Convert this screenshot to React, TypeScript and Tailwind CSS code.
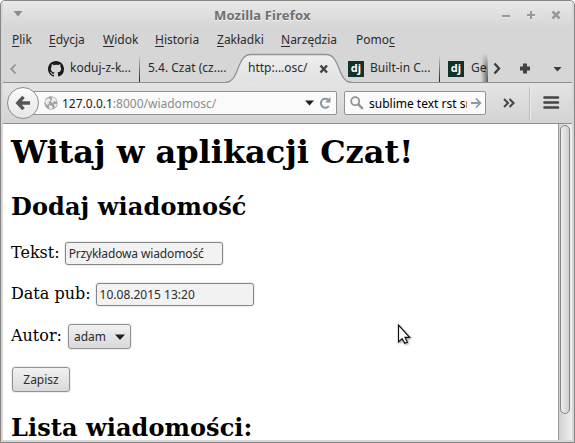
import React from 'react';

const menu = [
  { before: '', key: 'P', after: 'lik', width: 'w-[37px]' },
  { before: '', key: 'E', after: 'dycja', width: 'w-[54px]' },
  { before: '', key: 'W', after: 'idok', width: 'w-[52px]' },
  { before: '', key: 'H', after: 'istoria', width: 'w-[62px]' },
  { before: '', key: 'Z', after: 'akładki', width: 'w-[64px]' },
  { before: '', key: 'N', after: 'arzędzia', width: 'w-[75px]' },
  { before: 'Pomo', key: 'c', after: '', width: 'w-[60px]' },
];

function Django() {
  return (
    <span className="flex h-4 w-4 shrink-0 items-center justify-center bg-[#113228] font-['Open_Sans',sans-serif] text-[11px] leading-4 font-bold text-white">
      <span className="-mt-[2px]">dj</span>
    </span>
  );
}

function GitHub() {
  return (
    <svg className="h-4 w-4 shrink-0" viewBox="0 0 16 16" fill="#1b1b1b">
      <path d="M8 0C3.58 0 0 3.58 0 8c0 3.54 2.29 6.53 5.47 7.59.4.07.55-.17.55-.38 0-.19-.01-.82-.01-1.49-2.01.37-2.53-.49-2.69-.94-.09-.23-.48-.94-.82-1.13-.28-.15-.68-.52-.01-.53.63-.01 1.08.58 1.23.82.72 1.21 1.87.87 2.33.66.07-.52.28-.87.51-1.07-1.78-.2-3.64-.89-3.64-3.95 0-.87.31-1.59.82-2.15-.08-.2-.36-1.02.08-2.12 0 0 .67-.21 2.2.82A7.6 7.6 0 0 1 8 3.86c.68 0 1.36.09 2 .27 1.53-1.04 2.2-.82 2.2-.82.44 1.1.16 1.92.08 2.12.51.56.82 1.27.82 2.15 0 3.07-1.87 3.75-3.65 3.95.29.25.54.73.54 1.48 0 1.07-.01 1.93-.01 2.2 0 .21.15.46.55.38A8.01 8.01 0 0 0 16 8c0-4.42-3.58-8-8-8z" />
    </svg>
  );
}

function Separator() {
  return <span className="h-[27px] w-px shrink-0 self-end bg-linear-to-b from-[#d6d6d6] to-[#222]" />;
}

function TitleBar() {
  return (
    <div className="flex h-[27px] shrink-0 items-center bg-linear-to-b from-[#e8e8e8] to-[#d6d6d6]">
      <svg className="ml-[10px] h-[27px] w-[10px]" viewBox="0 0 10 27"><path d="M0.5 10h9L5 15.5z" fill="#8c8c8c" /></svg>
      <div className="ml-[191px] w-[110px] pt-px text-[13px] leading-[26px] font-bold tracking-[0.16px] whitespace-nowrap text-[#707070] [text-shadow:0_1px_0_#f4f4f4]">Mozilla Firefox</div>
      <svg className="ml-[178px] h-[27px] w-[62px]" viewBox="0 0 62 27" fill="none">
        <path d="M0 15.5h8M25 14.5h8M29 10.5v8M51 11.5l6 6m0-6l-6 6" stroke="#f3f3f3" strokeWidth="2" />
        <path d="M0 15h8M25 14h8M29 10v8" stroke="#989898" strokeWidth="2" />
        <path d="M50.5 10.5l7 7m0-7l-7 7" stroke="#989898" strokeWidth="2.6" />
      </svg>
    </div>
  );
}

function MenuBar() {
  return (
    <div className="flex h-[25px] shrink-0 items-center pb-[2px] pl-[9px] text-[12px] leading-4 text-[#2b2b2b]">
      {menu.map((m) => (
        <span key={m.key} className={`${m.width} shrink-0 whitespace-nowrap`}>
          {m.before}<span className="underline decoration-1 underline-offset-2">{m.key}</span>{m.after}
        </span>
      ))}
    </div>
  );
}

function Tabs() {
  return (
    <div className="flex h-[30px] shrink-0 items-center border-b border-[#8e8e8e] text-[12px] leading-4 whitespace-nowrap text-[#2b2b2b]">
      <svg className="h-[29px] w-[45px] shrink-0" viewBox="0 0 45 29"><path d="M12.5 11.5L8.3 16l4.2 4.5" fill="none" stroke="#929292" strokeWidth="1.8" /></svg>
      <span className="mt-[2px] flex"><GitHub /></span>
      <span className="mt-px ml-[6px] w-[69px] shrink-0">koduj-z-k...</span>
      <Separator />
      <span className="mt-px ml-[8px] w-[80px] shrink-0">5.4. Czat (cz....</span>
      <div className="relative -mb-px flex h-[30px] w-[120px] shrink-0 items-center self-start pl-[20px]">
        <svg className="absolute top-0 -left-[3px] h-[30px] w-[127px]" viewBox="0 0 127 30">
          <defs><linearGradient id="tab" x1="0" y1="0" x2="0" y2="1"><stop stopColor="#eeeeee" /><stop offset="1" stopColor="#e1e1e1" /></linearGradient></defs>
          <path d="M1 29.5C15 29.5 11 1.5 26 1.5H101C116 1.5 112 29.5 126 29.5V30H1Z" fill="url(#tab)" />
          <path d="M0 29.5C15 29.5 11 1.5 26 1.5H101C116 1.5 112 29.5 127 29.5" fill="none" stroke="#8e9499" strokeWidth="1.3" />
        </svg>
        <span className="relative w-[71px]">http:...osc/</span>
        <svg className="relative mt-px h-[10px] w-[10px]" viewBox="0 0 10 10"><path d="M1.5 1.5l6.5 7m0-7l-6.5 7" stroke="#444" strokeWidth="2.5" /></svg>
      </div>
      <span className="mt-[2px] flex"><Django /></span>
      <span className="mt-px ml-[6px] w-[69px] shrink-0">Built-in C...</span>
      <Separator />
      <span className="mt-[2px] ml-[8px] flex"><Django /></span>
      <div className="relative ml-[7px] h-[29px] w-[16px] shrink-0 pt-px leading-[28px]">
        Ge
        <span className="absolute inset-y-0 right-0 w-[6px] bg-linear-to-r from-transparent to-black/45 [mask-image:linear-gradient(transparent,black_50%)]" />
      </div>
      <span className="h-[27px] w-px shrink-0 self-end bg-linear-to-b from-[#d6d6d6] to-[#555]" />
      <svg className="h-[29px] w-[82px] shrink-0" viewBox="0 0 82 29">
        <path d="M6.5 10.5l4.5 5-4.5 5" fill="none" stroke="#3c4143" strokeWidth="2.4" />
        <path d="M32 15.5h10M37 10.5v10" stroke="#444" strokeWidth="4" />
        <path d="M65.5 14h8l-4 4.5z" fill="#2f3c49" />
      </svg>
    </div>
  );
}

function NavBar() {
  return (
    <div className="flex h-[41px] shrink-0 items-center border-b border-[#8e8e8e] bg-linear-to-b from-[#e4e4e4] to-[#d3d3d3] pl-[4px] text-[12px] leading-4 whitespace-nowrap">
      <div className="z-10 flex h-[32px] w-[32px] shrink-0 items-center justify-center rounded-full border border-[#8290a0] bg-linear-to-b from-[#fbfbfb] to-[#e6e6e6]">
        <svg className="h-[16px] w-[16px]" viewBox="0 0 16 16"><path d="M8.5 1.8L2.8 8l5.7 6.2M3 8h12" fill="none" stroke="#555" strokeWidth="3.4" /></svg>
      </div>
      <div className="-ml-[9px] flex h-[24px] w-[307px] shrink-0 items-center rounded-[2px] border border-[#929292] bg-[#fafafa] pl-[13px]">
        <svg className="h-[14px] w-[14px] shrink-0" viewBox="0 0 14 14">
          <circle cx="7" cy="7" r="6.7" fill="#a4a4a4" />
          <path d="M1 5l3-3 2 1 .5 2-2 1 .5 2-2.5 1zM8 1l3 1 2 4-3-1-1 2-2-1 1-3zM5 9l3 1 1 2-2 1.5-2-1.5zM10 8l3 0-2 4z" fill="#ededed" />
        </svg>
        <span className="mt-px ml-[4px] w-[242px] shrink-0 text-[#8b8b8b]"><span className="text-[#1d1d1d]">127.0.0.1</span>:8000/wiadomosc/</span>
        <svg className="h-[20px] w-[32px] shrink-0" viewBox="0 0 32 20">
          <path d="M1 7.5h9l-4.5 5z" fill="#222" />
          <path d="M24.3 6.8a4.5 4.5 0 1 0 .6 6.2" fill="none" stroke="#8997a5" strokeWidth="2" />
          <path d="M26.5 4v5.5H21z" fill="#8997a5" />
        </svg>
      </div>
      <div className="ml-[7px] flex h-[24px] w-[142px] shrink-0 items-center rounded-[2px] border border-[#929292] bg-[#fafafa] pl-[5px]">
        <svg className="h-[14px] w-[14px] shrink-0" viewBox="0 0 14 14" fill="none" stroke="#929292"><circle cx="5.2" cy="5.2" r="4" strokeWidth="1.8" /><path d="M8.3 8.3l4.5 4.5" strokeWidth="2.4" /></svg>
        <span className="mt-px ml-[5px] w-[98px] shrink-0 overflow-hidden">sublime text rst sr</span>
        <svg className="ml-[4px] h-[12px] w-[11px] shrink-0" viewBox="0 0 11 12"><path d="M0 6h9M5 1.5L9.3 6 5 10.5" fill="none" stroke="#8b9aa9" strokeWidth="1.8" /></svg>
      </div>
      <svg className="h-[40px] w-[84px] shrink-0" viewBox="0 0 84 40">
        <path d="M18 16l4 4-4 4M23.5 16l4 4-4 4" fill="none" stroke="#484848" strokeWidth="2.1" />
        <path d="M43.5 4v33" stroke="#bcbcbc" /><path d="M44.5 4v33" stroke="#ededed" />
        <path d="M58.5 14.5h13.5M58.5 19.5h13.5M58.5 24.5h13.5" stroke="#454545" strokeWidth="2.6" strokeLinecap="round" />
      </svg>
    </div>
  );
}

const field = "h-[23px] w-[158px] rounded-[3px] border border-[#858585] bg-[#f2f2f2] pl-[3px] font-['Noto_Sans',sans-serif] text-[12px] leading-[21px] text-[#2b2b2b] shadow-[0_0_0_1px_#eeeeee]";
const button = "h-[25px] rounded-[3px] border border-[#929292] bg-linear-to-b from-[#f1f1f1] to-[#d9d9d9] font-['Noto_Sans',sans-serif] text-[12px] leading-[23px] text-[#2b2b2b] shadow-[0_0_0_1px_#eeeeee]";

function Page() {
  return (
    <main className="relative h-full flex-1 overflow-hidden bg-white pl-[8px] font-['DejaVu_Serif',serif] text-[16px] text-black">
      <h1 className="mt-[9px] text-[32px] leading-[38px] font-bold whitespace-nowrap">Witaj w aplikacji Czat!</h1>
      <h2 className="mt-[22px] text-[24px] leading-[28px] font-bold tracking-[0.11px]">Dodaj wiadomość</h2>
      <div className="mt-[21px] flex h-[23px] items-center gap-[5px]"><label htmlFor="text" className="-mt-px">Tekst:</label><input id="text" className={`${field} tracking-[-0.13px]`} defaultValue="Przykładowa wiadomość" /></div>
      <div className="mt-[18px] flex h-[23px] items-center gap-[5px]"><label htmlFor="date" className="-mt-px">Data pub:</label><input id="date" className={field} defaultValue="10.08.2015 13:20" /></div>
      <div className="mt-[18px] flex h-[25px] items-center gap-[6px]">
        <span className="-mt-[2px]">Autor:</span>
        <button className={`${button} flex w-[63px] items-center justify-between px-[5px]`}>adam<svg className="h-[6px] w-[10px]" viewBox="0 0 10 6"><path d="M0 .5h10L5 6z" fill="#222" /></svg></button>
      </div>
      <button className={`${button} mt-[18px] ml-px block w-[58px]`}>Zapisz</button>
      <h2 className="mt-[22px] text-[24px] leading-[28px] font-bold tracking-[0.08px]">Lista wiadomości:</h2>
      <svg className="absolute top-[199px] left-[394px] h-[23px] w-[16px] drop-shadow-[1px_1px_1px_rgba(0,0,0,.4)]" viewBox="0 0 16 23"><path d="M1.5 2v17l3.7-3.4 2.5 4.7 2.6-1.2-2.3-4.7h4.6z" fill="white" stroke="#111" strokeWidth="1.2" /></svg>
    </main>
  );
}

export default function App() {
  return (
    <div className="h-[443px] w-[575px] overflow-hidden bg-white">
      <div className="flex h-full w-full flex-col overflow-hidden rounded-t-[5px] border border-[#858585] bg-[#d6d6d6] px-[2px] pb-[2px] font-['Noto_Sans',sans-serif] shadow-[inset_0_1px_0_#f5f5f5]">
        <TitleBar />
        <MenuBar />
        <Tabs />
        <NavBar />
        <div className="flex min-h-0 flex-1">
          <Page />
          <div className="w-[14px] shrink-0 border-l border-[#999] bg-linear-to-r from-[#d0d0d0] to-[#f0f0f0] pt-px pl-px">
            <div className="h-[289px] w-[10px] rounded-[5px] border border-[#858585] bg-linear-to-r from-[#eeeeee] to-[#cfcfcf]" />
          </div>
        </div>
      </div>
    </div>
  );
}
